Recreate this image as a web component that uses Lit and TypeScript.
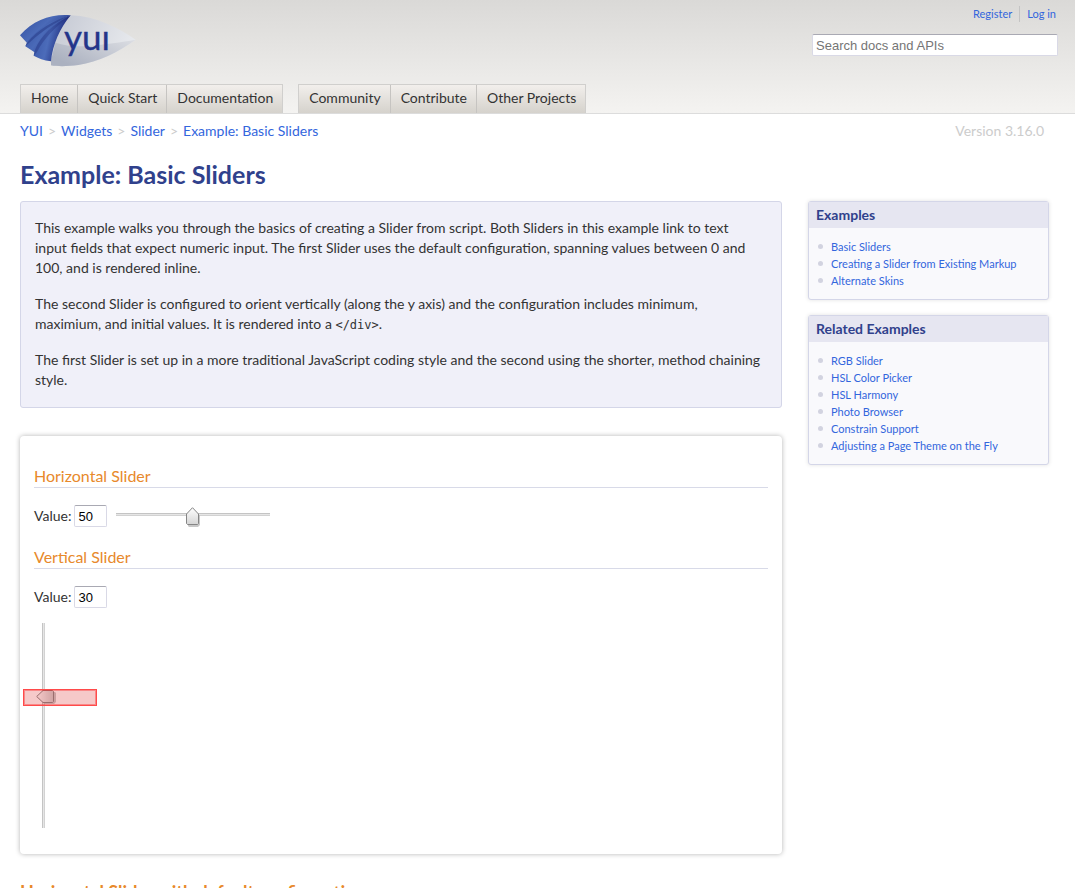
import { LitElement, html, css, svg } from "lit";
import { customElement, state } from "lit/decorators.js";

const NAV_GROUPS = [
  ["Home", "Quick Start", "Documentation"],
  ["Community", "Contribute", "Other Projects"],
];
const CRUMBS = ["YUI", "Widgets", "Slider", "Example: Basic Sliders"];
const EXAMPLES = ["Basic Sliders", "Creating a Slider from Existing Markup", "Alternate Skins"];
const RELATED = [
  "RGB Slider",
  "HSL Color Picker",
  "HSL Harmony",
  "Photo Browser",
  "Constrain Support",
  "Adjusting a Page Theme on the Fly",
];

const logo = svg`
  <defs>
    <linearGradient id="blade" x1="0" y1="0" x2="1" y2="0.6">
      <stop offset="0" stop-color="#2f4b9c" />
      <stop offset="0.5" stop-color="#4a6ab8" />
      <stop offset="1" stop-color="#22317f" />
    </linearGradient>
    <linearGradient id="front" x1="0" y1="0.4" x2="1" y2="0.7">
      <stop offset="0" stop-color="#3b58a8" />
      <stop offset="0.4" stop-color="#4c6cba" />
      <stop offset="0.8" stop-color="#1d2a7c" />
    </linearGradient>
    <linearGradient id="body" x1="0" y1="0" x2="1" y2="0.3">
      <stop offset="0" stop-color="#c3c7d2" />
      <stop offset="1" stop-color="#e6e8ec" />
    </linearGradient>
    <linearGradient id="belly" x1="0" y1="0.6" x2="1" y2="0">
      <stop offset="0" stop-color="#abb1c0" />
      <stop offset="1" stop-color="#dcdee3" />
    </linearGradient>
  </defs>
  <path fill="url(#body)" d="M167 22C245 25 310 60 362 95C310 133 250 161 190 171C160 175 130 176 108 172L108 158C113 110 135 60 167 22Z" />
  <path fill="url(#belly)" d="M121 104C150 113 185 117 220 114C270 110 320 102 362 95C310 133 250 161 190 171C160 175 130 176 108 172L108 158Z" />
  <path fill="url(#blade)" d="M15 82C55 36 110 17 167 22C115 38 65 72 36 105Z" />
  <path fill="url(#blade)" d="M31 115C42 82 100 37 167 22C122 48 85 90 62 135L31 115Z" />
  <path fill="#22337f" opacity="0.45" d="M36 105C68 66 115 36 167 22C122 42 80 70 48 100L31 115Z" />
  <path fill="url(#front)" d="M56 143C64 98 110 50 167 22C135 60 113 110 108 160C86 157 70 151 56 143Z" />
  <path fill="#22337f" opacity="0.4" d="M60 126C76 84 116 48 167 22C122 56 86 92 66 132L56 143Z" />
  <text class="logo-text" x="147" y="125">yuı</text>
`;

@customElement("app-root")
export class AppRoot extends LitElement {
  @state() private horizontal = 50;
  @state() private vertical = 30;

  static styles = css`
    :host {
      display: block;
      min-height: 100vh;
      padding-right: 17px;
      background: #fff;
      color: #333;
      font: 14px/20px Lato, sans-serif;
    }
    * { box-sizing: border-box; }
    h1, h2, h3, p, ul { margin: 0; padding: 0; font-weight: normal; }
    ul { list-style: none; }
    a { color: #36d; text-decoration: none; }
    .header {
      display: grid;
      grid-template-columns: 1fr 246px;
      grid-template-rows: 84px 29px;
      padding: 0 17px 0 20px;
      border-bottom: 1px solid #dcdcdc;
      background: linear-gradient(#dad9d7, #f4f3f1);
    }
    .logo { padding-top: 14px; }
    .logo svg { display: block; }
    .logo-text { font: 105px Lato, sans-serif; fill: #24358a; stroke: #24358a; stroke-width: 1px; }
    .tools { display: flex; flex-direction: column; padding-top: 6px; gap: 12px; }
    .user { display: flex; justify-content: flex-end; padding-right: 2px; font-size: 11px; line-height: 16px; }
    .user a + a { margin-left: 7px; padding-left: 7px; border-left: 1px solid #c4c4c4; }
    .text {
      height: 22px;
      margin: 0;
      padding: 0 3px;
      border: 1px solid #d9d9e6;
      border-top-color: #a9a9b3;
      border-radius: 2px;
      background: #fff;
      color: #000;
      font: 13px "Liberation Sans", sans-serif;
      outline: none;
    }
    .search { width: 100%; }
    .search::placeholder { color: #757575; }
    .nav { display: flex; gap: 15px; grid-column: 1 / -1; }
    .tabs { display: flex; border: 1px solid #d0cfcd; border-bottom: 0; background: linear-gradient(#f2efec, #d5d2cc); }
    .tab { padding: 0 9px 0 10px; color: #333; line-height: 26px; }
    .tab + .tab { border-left: 1px solid #c6c4c1; }
    .crumbs { display: flex; justify-content: space-between; padding: 7px 31px 0 20px; }
    .trail { display: flex; gap: 5px; }
    .sep, .version { color: #ccc; }
    .title { padding: 17px 20px 11px; color: #30418c; font-size: 25px; font-weight: bold; line-height: 32px; }
    .page { display: grid; grid-template-columns: minmax(0, 1fr) 241px; gap: 26px; align-items: start; padding: 0 26px 0 20px; }
    .intro {
      display: grid;
      gap: 16px;
      padding: 16px 18px 17px 14px;
      border: 1px solid #d4d6e8;
      border-radius: 3px;
      background: #f0f0f9;
    }
    .code { font-family: "DejaVu Sans Mono", monospace; font-size: 12px; line-height: 16px; }
    .demo { margin-top: 28px; padding: 29px 14px 26px; border-radius: 4px; background: #fff; box-shadow: 0 0 5px rgba(0, 0, 0, 0.3); }
    .subhead { border-bottom: 1px solid #d8dae8; color: #e8892b; font-size: 16px; line-height: 22px; }
    .row { display: flex; align-items: center; padding: 17px 0 19px; }
    .row .text { width: 33px; margin-left: 3px; }
    .row .across { margin-left: 9px; }
    .range { display: block; margin: 0; background: none; appearance: none; outline: none; }
    .range::-webkit-slider-thumb { appearance: none; border: 0; background: center / 100% 100% no-repeat; }
    .across { width: 154px; height: 22px; }
    .across::-webkit-slider-runnable-track {
      height: 22px;
      background: linear-gradient(#c4c4c4 1px, #e6e6e6 1px 2px, #d2d2d2 2px) 0 8px / 100% 3px no-repeat;
    }
    .across::-webkit-slider-thumb {
      width: 16px;
      height: 20px;
      margin-top: 2px;
      background-image: url("data:image/svg+xml,%3Csvg xmlns='http://www.w3.org/2000/svg' viewBox='0 0 16 20'%3E%3Cdefs%3E%3ClinearGradient id='g' x2='0' y2='1'%3E%3Cstop stop-color='%23fff'/%3E%3Cstop offset='1' stop-color='%23d4d4d4'/%3E%3C/linearGradient%3E%3C/defs%3E%3Cpath d='M3 9L8 3L15 9V18L13 20H4L3 19Z' fill='%23000' opacity='.22'/%3E%3Cpath d='M1.500 7L7.500 0.700L13.500 7V16.500L12.500 17.500H2.500L1.500 16.500Z' fill='url(%23g)' stroke='%23858585'/%3E%3C/svg%3E");
    }
    .upright { position: relative; width: 22px; margin-top: -4px; }
    .down { writing-mode: vertical-lr; direction: rtl; width: 22px; height: 205px; }
    .down::-webkit-slider-runnable-track {
      width: 22px;
      background: linear-gradient(90deg, #c4c4c4 1px, #e6e6e6 1px 2px, #d2d2d2 2px) 8px 0 / 3px 100% no-repeat;
    }
    .down::-webkit-slider-thumb {
      width: 20px;
      height: 16px;
      margin-left: 2px;
      background-image: url("data:image/svg+xml,%3Csvg xmlns='http://www.w3.org/2000/svg' viewBox='0 0 20 16'%3E%3Cdefs%3E%3ClinearGradient id='g' x2='1' y2='0'%3E%3Cstop stop-color='%23fff'/%3E%3Cstop offset='1' stop-color='%23ccc'/%3E%3C/linearGradient%3E%3C/defs%3E%3Cpath d='M9 3L3 8L9 15H18L20 13V4L19 3Z' fill='%23000' opacity='.22'/%3E%3Cpath d='M7 1.500L0.700 7.500L7 13.500H16.500L17.500 12.500V2.500L16.500 1.500Z' fill='url(%23g)' stroke='%23858585'/%3E%3C/svg%3E");
    }
    .marker {
      position: absolute;
      top: 66px;
      left: -11px;
      width: 74px;
      height: 17px;
      border: 1px solid #ff4a4a;
      background: rgba(221, 40, 40, 0.25);
      box-shadow: inset 0 0 0 1px rgba(255, 40, 40, 0.4);
      pointer-events: none;
    }
    .section { margin-top: 26px; color: #e8892b; font-size: 18px; font-weight: bold; line-height: 24px; }
    .aside { display: grid; gap: 15px; }
    .box { border: 1px solid #d4d6e8; border-radius: 3px; background: #f9f9fc; box-shadow: 0 0 4px rgba(0, 0, 0, 0.12); }
    .box-title { padding: 0 7px; background: #e6e6f1; color: #30418c; font-size: 14px; font-weight: bold; line-height: 26px; }
    .links { padding: 10px 9px; font-size: 11px; line-height: 17px; }
    .links li { display: flex; align-items: center; gap: 8px; }
    .links li::before { content: ""; width: 5px; height: 5px; border-radius: 50%; background: #d2d3e0; }
  `;

  private box(title: string, items: string[]) {
    return html`<section class="box">
      <h2 class="box-title">${title}</h2>
      <ul class="links">${items.map((item) => html`<li><a href="#">${item}</a></li>`)}</ul>
    </section>`;
  }

  render() {
    return html`
      <header class="header">
        <a class="logo" href="#" aria-label="YUI">
          <svg width="120" height="55" viewBox="15 18 360 165">${logo}</svg>
        </a>
        <div class="tools">
          <div class="user"><a href="#">Register</a><a href="#">Log in</a></div>
          <input class="text search" type="search" placeholder="Search docs and APIs" aria-label="Search docs and APIs" />
        </div>
        <nav class="nav">
          ${NAV_GROUPS.map((group) => html`<div class="tabs">${group.map((t) => html`<a class="tab" href="#">${t}</a>`)}</div>`)}
        </nav>
      </header>
      <div class="crumbs">
        <nav class="trail">
          ${CRUMBS.map((c, i) => html`${i ? html`<span class="sep">&gt;</span>` : ""}<a href="#">${c}</a>`)}
        </nav>
        <span class="version">Version 3.16.0</span>
      </div>
      <h1 class="title">Example: Basic Sliders</h1>
      <div class="page">
        <main>
          <div class="intro">
            <p>This example walks you through the basics of creating a Slider from script. Both Sliders in this example link to text input fields that expect numeric input. The first Slider uses the default configuration, spanning values between 0 and 100, and is rendered inline.</p>
            <p>The second Slider is configured to orient vertically (along the y axis) and the configuration includes minimum, maximium, and initial values. It is rendered into a <code class="code">&lt;/div&gt;</code>.</p>
            <p>The first Slider is set up in a more traditional JavaScript coding style and the second using the shorter, method chaining style.</p>
          </div>
          <div class="demo">
            <h3 class="subhead">Horizontal Slider</h3>
            <div class="row">
              <label for="h-value">Value:</label>
              <input class="text" id="h-value" type="text" .value=${String(this.horizontal)}
                @change=${(e: Event) => (this.horizontal = Number((e.target as HTMLInputElement).value))} />
              <input class="range across" type="range" min="0" max="100" aria-label="Horizontal value" .value=${String(this.horizontal)}
                @input=${(e: Event) => (this.horizontal = Number((e.target as HTMLInputElement).value))} />
            </div>
            <h3 class="subhead">Vertical Slider</h3>
            <div class="row">
              <label for="v-value">Value:</label>
              <input class="text" id="v-value" type="text" .value=${String(this.vertical)}
                @change=${(e: Event) => (this.vertical = Number((e.target as HTMLInputElement).value))} />
            </div>
            <div class="upright">
              <input class="range down" type="range" min="-100" max="100" aria-label="Vertical value" .value=${String(this.vertical)}
                @input=${(e: Event) => (this.vertical = Number((e.target as HTMLInputElement).value))} />
              <div class="marker"></div>
            </div>
          </div>
          <h2 class="section">Horizontal Slider with default configuration</h2>
        </main>
        <aside class="aside">${this.box("Examples", EXAMPLES)}${this.box("Related Examples", RELATED)}</aside>
      </div>
    `;
  }
}
